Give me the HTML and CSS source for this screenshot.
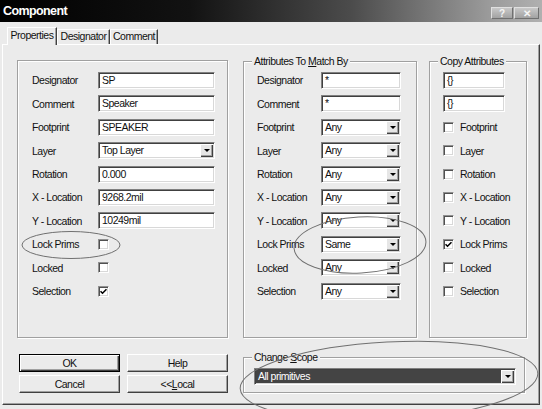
FILE: index.html
```html
<!DOCTYPE html>
<html>
<head>
<meta charset="utf-8">
<title>Component</title>
<link rel="stylesheet" href="styles.css">
</head>
<body>
<div class="window">
  <div class="titlebar">
    <span class="title">Component</span>
    <div class="tbtns"><span class="tbtn q">?</span><span class="tbtn x">✕</span></div>
  </div>
  <div class="tabs">
    <div class="tab active t-props">Properties</div>
    <div class="tab t-des">Designator</div>
    <div class="tab t-com">Comment</div>
  </div>
  <div class="panel">
    <div class="groups">
      <fieldset class="group g-left">
        <div class="row"><span class="lbl">Designator</span><div class="edit">SP</div></div>
        <div class="row"><span class="lbl">Comment</span><div class="edit">Speaker</div></div>
        <div class="row"><span class="lbl">Footprint</span><div class="edit">SPEAKER</div></div>
        <div class="row"><span class="lbl">Layer</span><div class="combo"><span class="val">Top Layer</span><span class="arrow"></span></div></div>
        <div class="row"><span class="lbl">Rotation</span><div class="edit">0.000</div></div>
        <div class="row"><span class="lbl">X - Location</span><div class="edit">9268.2mil</div></div>
        <div class="row"><span class="lbl">Y - Location</span><div class="edit">10249mil</div></div>
        <div class="row"><span class="lbl">Lock Prims</span><span class="chk"></span></div>
        <div class="row"><span class="lbl">Locked</span><span class="chk"></span></div>
        <div class="row"><span class="lbl">Selection</span><span class="chk"><svg width="7" height="7" viewBox="0 0 7 7"><path d="M0.5 3.2 L2.5 5.2 L6.5 1.2" fill="none" stroke="#000" stroke-width="1.6"/></svg></span></div>
      </fieldset>
      <fieldset class="group g-mid">
        <legend>Attributes To <u>M</u>atch By</legend>
        <div class="row"><span class="lbl">Designator</span><div class="edit">*</div></div>
        <div class="row"><span class="lbl">Comment</span><div class="edit">*</div></div>
        <div class="row"><span class="lbl">Footprint</span><div class="combo"><span class="val">Any</span><span class="arrow"></span></div></div>
        <div class="row"><span class="lbl">Layer</span><div class="combo"><span class="val">Any</span><span class="arrow"></span></div></div>
        <div class="row"><span class="lbl">Rotation</span><div class="combo"><span class="val">Any</span><span class="arrow"></span></div></div>
        <div class="row"><span class="lbl">X - Location</span><div class="combo"><span class="val">Any</span><span class="arrow"></span></div></div>
        <div class="row"><span class="lbl">Y - Location</span><div class="combo"><span class="val">Any</span><span class="arrow"></span></div></div>
        <div class="row"><span class="lbl">Lock Prims</span><div class="combo"><span class="val">Same</span><span class="arrow"></span></div></div>
        <div class="row"><span class="lbl">Locked</span><div class="combo"><span class="val">Any</span><span class="arrow"></span></div></div>
        <div class="row"><span class="lbl">Selection</span><div class="combo"><span class="val">Any</span><span class="arrow"></span></div></div>
      </fieldset>
      <fieldset class="group g-right">
        <legend>Copy Attributes</legend>
        <div class="row"><div class="edit">{}</div></div>
        <div class="row"><div class="edit">{}</div></div>
        <div class="row"><span class="chk"></span><span class="clbl">Footprint</span></div>
        <div class="row"><span class="chk"></span><span class="clbl">Layer</span></div>
        <div class="row"><span class="chk"></span><span class="clbl">Rotation</span></div>
        <div class="row"><span class="chk"></span><span class="clbl">X - Location</span></div>
        <div class="row"><span class="chk"></span><span class="clbl">Y - Location</span></div>
        <div class="row"><span class="chk"><svg width="7" height="7" viewBox="0 0 7 7"><path d="M0.5 3.2 L2.5 5.2 L6.5 1.2" fill="none" stroke="#000" stroke-width="1.6"/></svg></span><span class="clbl">Lock Prims</span></div>
        <div class="row"><span class="chk"></span><span class="clbl">Locked</span></div>
        <div class="row"><span class="chk"></span><span class="clbl">Selection</span></div>
      </fieldset>
    </div>
    <div class="bottom">
      <div class="buttons">
        <div class="btn default">OK</div>
        <div class="btn">Help</div>
        <div class="btn">Cancel</div>
        <div class="btn">&lt;&lt; <u>L</u>ocal</div>
      </div>
      <fieldset class="group g-scope">
        <legend>Change <u>S</u>cope</legend>
        <div class="combo wide"><span class="val sel">All primitives</span><span class="arrow"></span></div>
      </fieldset>
    </div>
  </div>
  <svg class="marks" width="542" height="409" viewBox="0 0 542 409">
    <ellipse cx="71" cy="245" rx="49" ry="13.5" />
    <ellipse cx="360" cy="245" rx="66" ry="28" transform="rotate(-3 360 245)" />
    <ellipse cx="389" cy="381" rx="149" ry="39" transform="rotate(-3 389 381)" />
  </svg>
</div>
</body>
</html>
```

FILE: styles.css
```css
* { box-sizing: border-box; }
html, body { margin: 0; padding: 0; }
body {
  width: 542px;
  height: 409px;
  overflow: hidden;
  background: #ebebeb;
  font-family: "Liberation Sans", Arial, sans-serif;
  font-size: 10.5px;
  letter-spacing: -0.5px;
  color: #111;
}
.window { position: relative; width: 542px; height: 409px; }

.titlebar {
  height: 22px;
  display: flex;
  align-items: center;
  justify-content: space-between;
  padding: 0 3px;
  color: #fff;
  background: linear-gradient(to right, #000 0%, #121212 35%, #4c4c4c 65%, #9a9a9a 90%, #b0b0b0 100%);
}
.title { font-weight: bold; font-size: 12.5px; letter-spacing: -0.6px; }
.tbtns { display: flex; gap: 1px; align-self: flex-end; margin-bottom: 3px; }
.tbtn {
  height: 12px;
  display: flex;
  align-items: center;
  justify-content: center;
  font-size: 10px;
  font-weight: bold;
  letter-spacing: 0;
  color: #f4f4f4;
  background: linear-gradient(#c8c8c8, #a2a2a2);
  border: 1px solid;
  border-color: #e0e0e0 #707070 #707070 #e0e0e0;
}
.tbtn.q { width: 22px; }
.tbtn.x { width: 25px; }

.tabs { height: 22px; display: flex; align-items: flex-end; padding-left: 7px; }
.tab {
  height: 15px;
  text-align: center;
  line-height: 13px;
  white-space: nowrap;
  border: 1px solid;
  border-bottom: none;
  border-color: #fff #404040 transparent #fff;
  box-shadow: inset -1px 0 0 #a0a0a0;
}
.t-props { width: 50px; }
.t-des { width: 53px; }
.t-com { width: 48px; }
.tab.active {
  height: 18px;
  line-height: 15px;
  margin-bottom: -1px;
  position: relative;
  z-index: 1;
  background: #ebebeb;
}

.panel {
  margin-left: 2px;
  width: 538px;
  height: 361px;
  border: 1px solid;
  border-color: #fff #404040 #404040 #fff;
  box-shadow: inset -1px -1px 0 #a0a0a0;
  padding: 9px 0 0 14px;
}

.groups { display: flex; height: 284px; }
.group {
  margin: 0;
  padding: 0;
  min-width: 0;
  border: 1px solid #a0a0a0;
  box-shadow: inset 1px 1px 0 #fff, 1px 1px 0 #fff;
}
legend {
  padding: 0 2px;
  line-height: 14px;
  white-space: nowrap;
  background: #ebebeb;
}
.g-left { width: 211px; margin-top: 6px; margin-right: 15px; padding: 7.8px 0 0 14px; }
.g-mid { width: 174px; margin-right: 12px; padding: 0.8px 0 0 13px; }
.g-right { width: 98px; padding: 0.8px 0 0 13px; }
.g-mid legend, .g-right legend { margin-left: -5px; }

.row { height: 23.4px; display: flex; align-items: center; white-space: nowrap; }
.g-left .lbl { width: 66px; }
.g-left .edit, .g-left .combo { width: 117px; }
.g-mid .lbl { width: 64px; }
.g-mid .edit, .g-mid .combo { width: 80px; }
.g-right .edit { width: 62px; }
.clbl { margin-left: 6px; }

.edit, .combo {
  height: 17px;
  background: #fff;
  border: 1px solid;
  border-color: #808080 #fff #fff #808080;
  box-shadow: inset 1px 1px 0 #404040, inset -1px -1px 0 #d8d8d8;
}
.edit { padding-left: 3px; line-height: 15px; color: #111; }
.combo { display: flex; align-items: center; padding-right: 1px; }
.combo .val { flex: 1; padding-left: 3px; line-height: 13px; }
.arrow {
  width: 13px;
  height: 13px;
  background: #e6e6e6;
  box-shadow: inset 1px 1px 0 #fff, inset -1px -1px 0 #404040, inset -2px -2px 0 #a0a0a0;
  display: flex;
  align-items: center;
  justify-content: center;
}
.arrow::after {
  content: "";
  border-left: 3px solid transparent;
  border-right: 3px solid transparent;
  border-top: 3px solid #000;
}

.chk {
  width: 11px;
  height: 11px;
  background: #fff;
  border: 1px solid;
  border-color: #909090 #fff #fff #909090;
  box-shadow: inset 1px 1px 0 #505050, inset -1px -1px 0 #d8d8d8;
  display: flex;
  align-items: center;
  justify-content: center;
}
.chk svg { display: block; }

.bottom { display: flex; align-items: flex-start; margin-top: 12px; }
.buttons {
  display: grid;
  grid-template-columns: 101px 101px;
  grid-auto-rows: 18px;
  column-gap: 7px;
  row-gap: 3px;
  margin: 4px 0 0 2px;
}
.btn {
  display: flex;
  align-items: center;
  justify-content: center;
  background: #ebebeb;
  border: 1px solid;
  border-color: #fff #404040 #404040 #fff;
  box-shadow: inset -1px -1px 0 #a0a0a0;
}
.btn.default {
  border: 1px solid #000;
  box-shadow: inset 1px 1px 0 #fff, inset -1px -1px 0 #404040, inset -2px -2px 0 #a0a0a0;
}
.g-scope { width: 282px; height: 43px; margin-left: 15px; padding: 4px 0 0 10px; }
.g-scope legend { margin-left: -2px; }
.combo.wide { width: 262px; }
.combo .val.sel {
  background: #444;
  color: #fff;
  margin-left: 1px;
  padding-left: 2px;
  height: 13px;
}

.marks { position: absolute; left: 0; top: 0; pointer-events: none; }
.marks ellipse { fill: none; stroke: #707070; stroke-width: 1; }
```
